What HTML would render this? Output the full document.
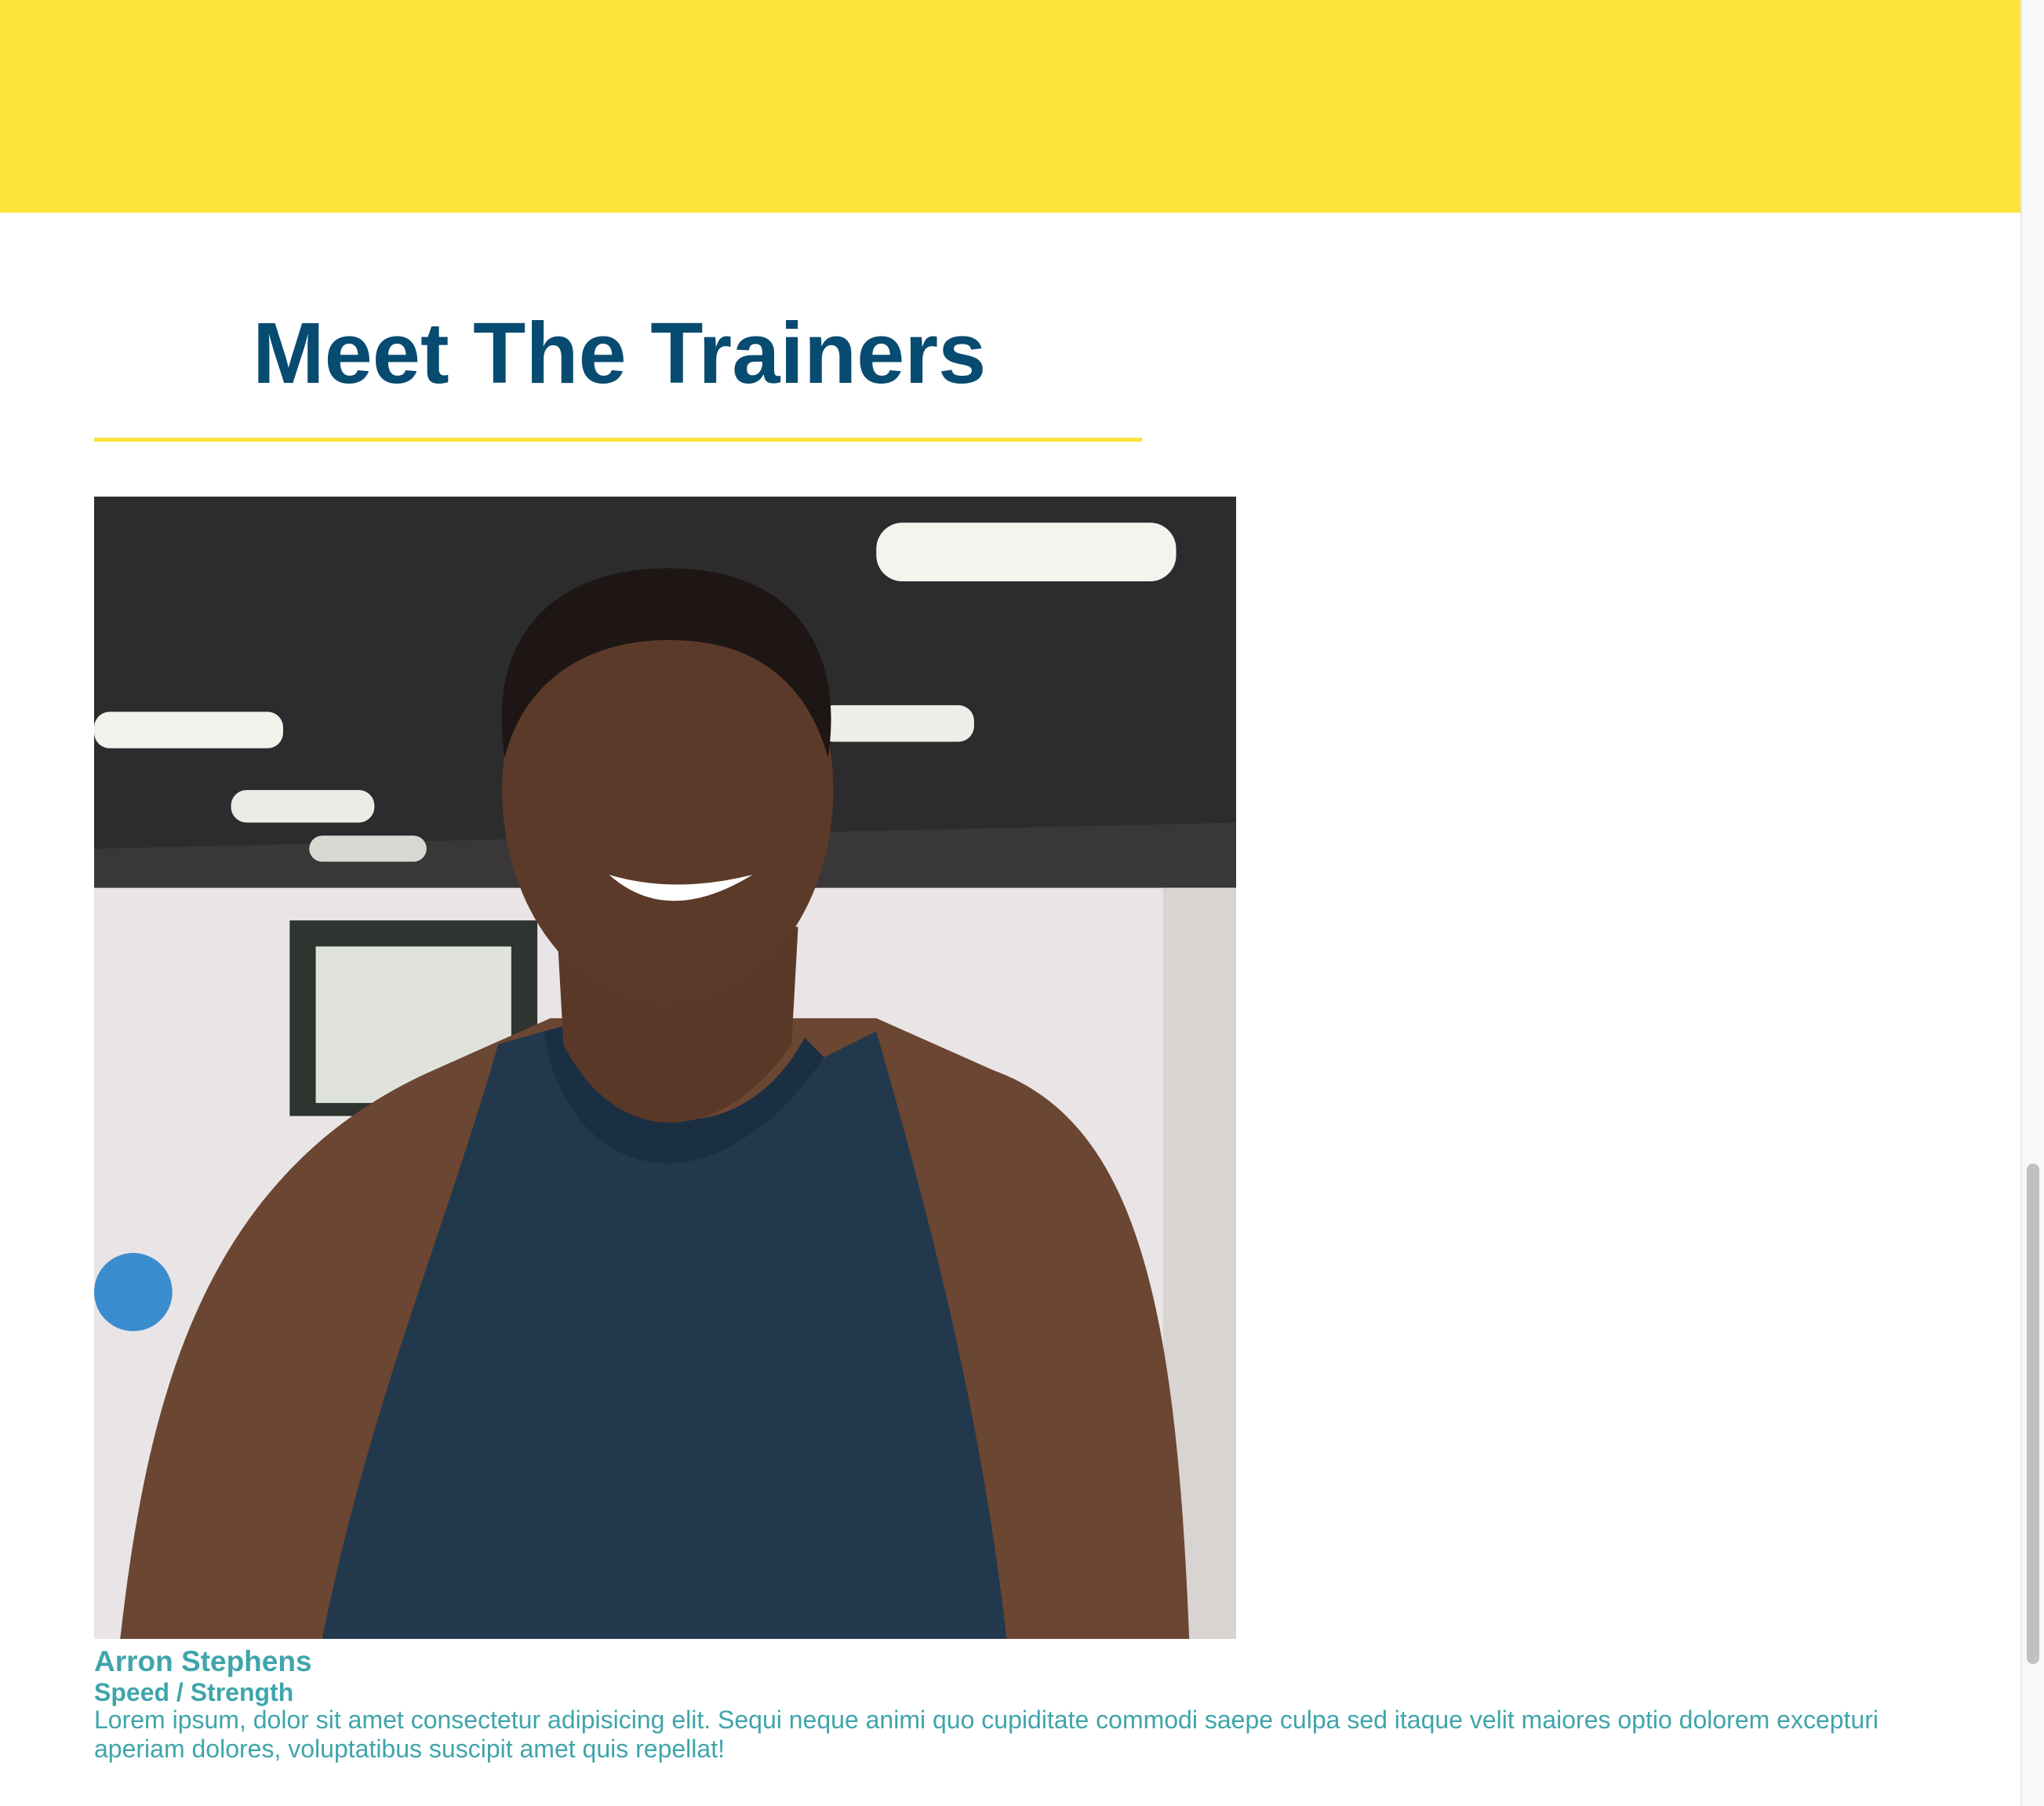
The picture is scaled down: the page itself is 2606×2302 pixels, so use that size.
<!DOCTYPE html>
<html><head><meta charset="utf-8"><style>
html,body{margin:0;padding:0;background:#fff;width:2606px;height:2302px;overflow:hidden;font-family:"Liberation Sans",Arial,sans-serif}
.top{position:absolute;left:0;top:0;width:2576px;height:271px;background:#fde33b}
h1{position:absolute;left:322px;top:381px;margin:0;font-size:110px;line-height:140px;color:#084b70;font-weight:bold;white-space:nowrap}
.line{position:absolute;left:120px;top:558px;width:1336px;height:5px;background:#fbe035}
.photo{position:absolute;left:120px;top:633px;width:1456px;height:1456px}
.name{position:absolute;left:120px;top:2097px;font-size:37px;font-weight:bold;color:#3fa5ab;line-height:42px}
.sub{position:absolute;left:120px;top:2139px;font-size:32px;font-weight:bold;color:#3fa5ab;line-height:36px}
.p{position:absolute;left:120px;top:2174px;font-size:32px;color:#3fa5ab;line-height:37px;white-space:nowrap}
.sb{position:absolute;left:2576px;top:0;width:30px;height:2302px;background:#f8f8f8;border-left:2px solid #e6e6e6;box-sizing:border-box}
.th{position:absolute;left:2584px;top:1483px;width:16px;height:638px;background:#c1c1c1;border-radius:8px}
</style></head><body>
<div class="top"></div>
<h1>Meet The Trainers</h1>
<div class="line"></div>
<svg class="photo" viewBox="0 0 876 876" preserveAspectRatio="none">
<rect width="876" height="876" fill="#e9e5e6"/>
<rect width="876" height="290" fill="#2c2b2d"/>
<path d="M0 270 L876 250 L876 300 L0 300Z" fill="#3a3738"/>
<rect x="600" y="20" width="230" height="45" rx="20" fill="#f4f3ee"/>
<rect x="0" y="165" width="145" height="28" rx="12" fill="#f2f1ec"/>
<rect x="105" y="225" width="110" height="25" rx="12" fill="#ecebe6"/>
<rect x="165" y="260" width="90" height="20" rx="10" fill="#d9d7d2"/>
<rect x="555" y="160" width="120" height="28" rx="12" fill="#efeee8"/>
<rect x="150" y="325" width="190" height="150" fill="#2e3430"/>
<rect x="170" y="345" width="150" height="120" fill="#dfe3dc"/>
<rect x="0" y="580" width="60" height="60" rx="30" fill="#3b8ccf"/>
<rect x="820" y="300" width="56" height="576" fill="#d8d4d2"/>
<path d="M20 876 C40 700 80 520 260 440 L350 400 L600 400 L690 440 C800 480 830 620 840 876Z" fill="#6b4632"/>
<path d="M175 876 C210 700 270 560 310 420 L345 410 C360 520 470 560 560 430 L600 410 C640 550 680 700 700 876Z" fill="#22384c"/>
<path d="M345 410 C360 520 470 560 560 430 L545 415 C500 500 400 500 365 405Z" fill="#1b2f42"/>
<path d="M355 330 L360 420 C400 500 480 500 535 420 L540 330Z" fill="#5a3828"/>
<ellipse cx="440" cy="225" rx="127" ry="165" fill="#5c3a2a"/>
<path d="M315 200 C300 100 360 55 440 55 C540 55 575 120 563 200 C540 120 480 110 440 110 C380 110 330 140 315 200Z" fill="#1d1614"/>
<path d="M395 290 Q440 330 505 290 Q445 305 395 290Z" fill="#fff"/>
</svg>
<div class="name">Arron Stephens</div>
<div class="sub">Speed / Strength</div>
<div class="p">Lorem ipsum, dolor sit amet consectetur adipisicing elit. Sequi neque animi quo cupiditate commodi saepe culpa sed itaque velit maiores optio dolorem excepturi<br>aperiam dolores, voluptatibus suscipit amet quis repellat!</div>
<div class="sb"></div><div class="th"></div>
</body></html>
